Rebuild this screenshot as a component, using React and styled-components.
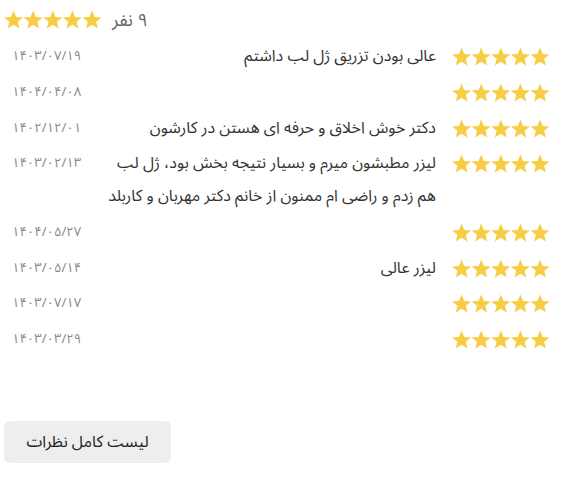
import React from 'react';
import styled, { createGlobalStyle } from 'styled-components';

const FONT = '"Noto Sans Arabic", "Vazirmatn", Tahoma, "DejaVu Sans", sans-serif'

const Global = createGlobalStyle`
  body {
    margin: 0;
    background: #fff;
    font-family: ${FONT};
  }
`

const Wrap = styled.div`
  direction: rtl;
  width: 582px;
  height: 478px;
  box-sizing: border-box;
  padding: 0 32px 0 4px;
  display: flex;
  flex-direction: column;
`

const HeaderHolder = styled.div`
  display: flex;
  justify-content: flex-end;
  margin-right: auto;
`

const Header = styled.div`
  display: flex;
  align-items: center;
  gap: 10px;
  height: 39px;
`

const Count = styled.span`
  font-size: 18px;
  color: #666;
`

const List = styled.div`
  display: flex;
  flex-direction: column;
`

const Row = styled.div`
  display: flex;
  align-items: flex-start;
  padding: 1.35px 0;
`

const StarCell = styled.div`
  width: 100px;
  flex-shrink: 0;
  height: 33px;
  display: flex;
  align-items: center;
`

const Text = styled.div`
  flex: 1;
  padding-right: 14px;
  font-size: 16px;
  line-height: 33px;
  color: #333;
`

const Date = styled.div`
  width: 100px;
  flex-shrink: 0;
  padding-left: 8px;
  box-sizing: border-box;
  font-size: 13px;
  line-height: 32px;
  height: 32px;
  color: #888;
  direction: ltr;
  text-align: left;
`

const Button = styled.button`
  margin-top: 63px;
  align-self: flex-end;
  width: 167px;
  height: 42px;
  border: none;
  border-radius: 6px;
  background: #eeeeee;
  color: #222;
  font-family: ${FONT};
  font-size: 16px;
  direction: rtl;
`

const starPath = 'M10 0 L12.6 6.4 L19.5 6.9 L14.2 11.3 L15.9 18 L10 14.3 L4.1 18 L5.8 11.3 L0.5 6.9 L7.4 6.4 Z'

function Stars() {
  return (
    <svg width="98" height="19" viewBox="0 0 98 19">
      {[0, 1, 2, 3, 4].map(i => (
        <path key={i} d={starPath} transform={`translate(${i * 19.6 - 0.4} 0.5)`} fill="#f7cd45" />
      ))}
    </svg>
  )
}

const reviews = [
  { text: 'عالی بودن تزریق ژل لب داشتم', date: '۱۴۰۳/۰۷/۱۹' },
  { text: '', date: '۱۴۰۴/۰۴/۰۸' },
  { text: 'دکتر خوش اخلاق و حرفه ای هستن در کارشون', date: '۱۴۰۲/۱۲/۰۱' },
  { text: 'لیزر مطبشون میرم و بسیار نتیجه بخش بود، ژل لب هم زدم و راضی ام ممنون از خانم دکتر مهربان و کاربلد', date: '۱۴۰۳/۰۲/۱۳' },
  { text: '', date: '۱۴۰۴/۰۵/۲۷' },
  { text: 'لیزر عالی', date: '۱۴۰۳/۰۵/۱۴' },
  { text: '', date: '۱۴۰۳/۰۷/۱۷' },
  { text: '', date: '۱۴۰۳/۰۳/۲۹' },
]

export default function App() {
  return (
    <Wrap>
      <Global />
      <HeaderHolder>
        <Header>
          <Count>۹ نفر</Count>
          <Stars />
        </Header>
      </HeaderHolder>
      <List>
        {reviews.map((r, i) => (
          <Row key={i}>
            <StarCell><Stars /></StarCell>
            <Text>{r.text}</Text>
            <Date>{r.date}</Date>
          </Row>
        ))}
      </List>
      <Button>لیست کامل نظرات</Button>
    </Wrap>
  )
}
